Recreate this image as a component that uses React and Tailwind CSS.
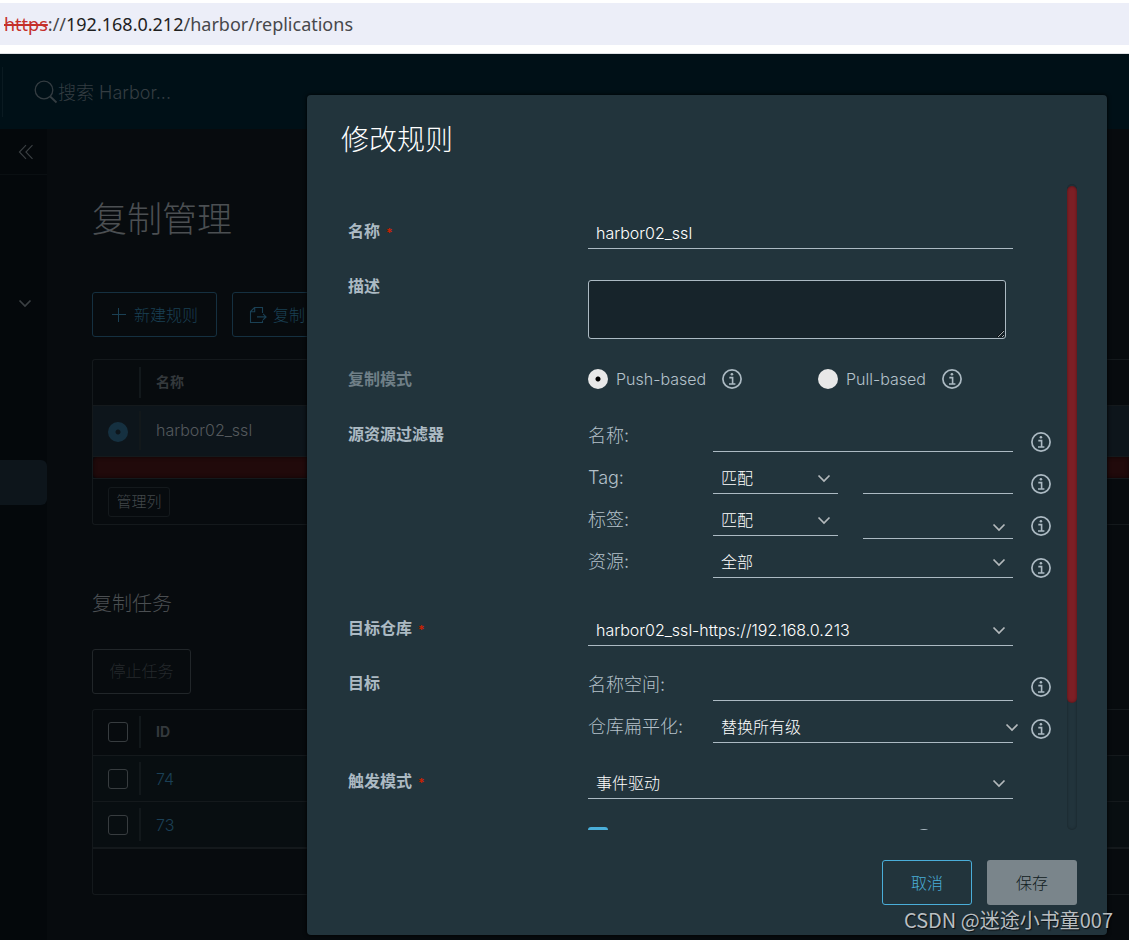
import clsx from "clsx";

const JOBS = [74, 73];

/* ── Icons ─────────────────────────────────────────────────────────── */

function InfoIcon({ className }) {
  return (
    <svg viewBox="0 0 20 20" className={clsx("size-5 shrink-0", className)} fill="none" aria-hidden="true">
      <circle cx="10" cy="10" r="9.1" stroke="currentColor" strokeWidth="1.7" />
      <circle cx="9.9" cy="5.3" r="1.3" fill="currentColor" />
      <path d="M7.3 8.6h3.3v6M7 15h6.4" stroke="currentColor" strokeWidth="1.6" />
    </svg>
  );
}

function Chevron({ className }) {
  return (
    <svg viewBox="0 0 14 9" className={clsx("h-[9px] w-[14px]", className)} fill="none" aria-hidden="true">
      <path d="M1.5 1.5 7 7l5.5-5.5" stroke="currentColor" strokeWidth="1.7" />
    </svg>
  );
}

function SearchIcon() {
  return (
    <svg viewBox="0 0 24 24" className="size-6" fill="none" stroke="currentColor" strokeWidth="1.3" aria-hidden="true">
      <circle cx="10" cy="10" r="8.8" />
      <path d="m16.2 16.5 6.3 6" strokeWidth="1.8" />
    </svg>
  );
}

function CollapseIcon() {
  return (
    <svg viewBox="0 0 16 16" className="size-4" fill="none" stroke="currentColor" strokeWidth="1.1" aria-hidden="true">
      <path d="M8 1.2 1.4 8 8 14.8M14.5 1.2 7.9 8l6.6 6.8" />
    </svg>
  );
}

function PlusIcon() {
  return (
    <svg viewBox="0 0 16 16" className="size-4" stroke="currentColor" aria-hidden="true">
      <path d="M1 7.5h14M7.5 1v14" />
    </svg>
  );
}

function ReplicateIcon() {
  return (
    <svg viewBox="0 0 18 18" className="size-[18px]" fill="none" stroke="currentColor" strokeWidth="1.1" aria-hidden="true">
      <path d="M13.5 7V1.5h-8l-4 4v11h12v-2M1.5 5.8h4.2V1.5M8 10.9h9M14 7.8l3.1 3.1-3.1 3" />
    </svg>
  );
}

/* ── Form parts ────────────────────────────────────────────────────── */

/** Label on the left, controls on the right. */
function FormRow({ label, htmlFor, required, muted, className, children }) {
  const Label = htmlFor ? "label" : "span";
  return (
    <div className={clsx("grid grid-cols-[240px_1fr] items-start", className)}>
      <Label
        htmlFor={htmlFor}
        className={clsx("text-base leading-7 font-bold", muted ? "text-[#6f7f87]" : "text-[#acbac3]")}
      >
        {label}
        {required && <span className="ml-1.5 align-middle text-xs leading-none text-[#c92100]">*</span>}
      </Label>
      <div>{children}</div>
    </div>
  );
}

function TextInput({ className, ...rest }) {
  return (
    <input
      type="text"
      className={clsx(
        "h-8 border-b border-[#acbac3] bg-transparent px-2 text-base font-light text-white outline-none",
        className
      )}
      {...rest}
    />
  );
}

function SelectInput({ options, className, chevronClass = "top-3 right-[7px]", ...rest }) {
  return (
    <div className={clsx("relative h-8", className)}>
      <select
        className="h-8 w-full appearance-none border-b border-[#acbac3] bg-transparent px-2 text-base font-light text-white outline-none"
        {...rest}
      >
        {options.map((o) => (
          <option key={o}>{o}</option>
        ))}
      </select>
      <Chevron className={clsx("pointer-events-none absolute text-[#b4b9bc]", chevronClass)} />
    </div>
  );
}

/** One line of a grouped field: caption, control and info mark. */
function SubField({ label, htmlFor, infoClass, children }) {
  return (
    <div className="grid grid-cols-[125px_300px_20px] items-end">
      <label htmlFor={htmlFor} className="text-lg leading-8 font-light text-[#b4c1ca]">
        {label}
      </label>
      <div className="flex items-end justify-between">{children}</div>
      <InfoIcon className={clsx("ml-[18px] text-[#acbac3]", infoClass)} />
    </div>
  );
}

function ModeRadio({ label, ...rest }) {
  return (
    <div className="flex w-[230px] items-center">
      <label className="flex items-center gap-2 text-base font-light text-[#b4c1ca]">
        <input
          type="radio"
          name="mode"
          className="size-5 appearance-none rounded-full bg-[#e8e8e8] checked:bg-[radial-gradient(circle,#000_2px,#e8e8e8_3px)]"
          {...rest}
        />
        {label}
      </label>
      <InfoIcon className="ml-4 text-[#acbac3]" />
    </div>
  );
}

function EditRuleDialog() {
  return (
    <div
      role="dialog"
      aria-labelledby="dialog-title"
      className="flex w-[800px] flex-col rounded bg-[#22343c] px-[30px] pb-[30px] shadow-[0_0_4px_#000]"
    >
      <h2 id="dialog-title" className="h-[89px] pt-[25px] pl-1 text-[28px] leading-10 font-light text-white">
        修改规则
      </h2>

      <div className="flex min-h-0 flex-1">
        <form className="flex-1 overflow-hidden pt-[33px] pl-[11px]">
          <FormRow label="名称" htmlFor="rule-name" required>
            <TextInput id="rule-name" defaultValue="harbor02_ssl" className="block w-[425px]" />
          </FormRow>

          <FormRow label="描述" htmlFor="rule-desc" className="mt-[23px]">
            <textarea
              id="rule-desc"
              className="mt-2 block h-[59px] w-[418px] rounded-[3px] border border-[#acbac3] bg-[#17242b] outline-none"
            />
          </FormRow>

          <FormRow label="复制模式" muted className="mt-[26px]">
            <div className="flex h-7 items-center">
              <ModeRadio label="Push-based" defaultChecked />
              <ModeRadio label="Pull-based" />
            </div>
          </FormRow>

          <FormRow label="源资源过滤器" className="mt-[27px]">
            <div className="flex flex-col gap-[10px]">
              <SubField label="名称:" htmlFor="filter-name">
                <TextInput id="filter-name" className="w-full" />
              </SubField>
              <SubField label="Tag:" htmlFor="filter-tag">
                <SelectInput id="filter-tag" options={["匹配", "排除"]} className="w-[125px]" />
                <TextInput aria-label="Tag" className="w-[150px]" />
              </SubField>
              <SubField label="标签:" htmlFor="filter-label">
                <SelectInput id="filter-label" options={["匹配", "排除"]} className="w-[125px]" />
                <SelectInput
                  aria-label="标签"
                  options={[""]}
                  className="-mb-[3px] w-[150px]"
                  chevronClass="top-4 right-[7px]"
                />
              </SubField>
              <SubField label="资源:" htmlFor="filter-resource">
                <SelectInput id="filter-resource" options={["全部"]} className="w-full" />
              </SubField>
            </div>
          </FormRow>

          <FormRow label="目标仓库" htmlFor="dest-registry" required className="mt-9">
            <SelectInput
              id="dest-registry"
              options={["harbor02_ssl-https://192.168.0.213"]}
              className="w-[425px]"
            />
          </FormRow>

          <FormRow label="目标" className="mt-[23px]">
            <div className="flex flex-col gap-[10px]">
              <SubField label="名称空间:" htmlFor="dest-namespace" infoClass="mb-1">
                <TextInput id="dest-namespace" className="w-full" />
              </SubField>
              <SubField label="仓库扁平化:" htmlFor="dest-flatten" infoClass="mb-1">
                <SelectInput
                  id="dest-flatten"
                  options={["替换所有级"]}
                  className="w-full"
                  chevronClass="top-3 -right-[6px]"
                />
              </SubField>
            </div>
          </FormRow>

          <FormRow label="触发模式" htmlFor="trigger" required className="mt-6">
            <SelectInput id="trigger" options={["事件驱动"]} className="w-[425px]" />
          </FormRow>

          {/* Runs past the bottom of the scroll area */}
          <FormRow className="mt-7">
            <div className="flex items-start">
              <input
                type="checkbox"
                defaultChecked
                aria-label="删除本地资源时同时也删除远程的资源"
                className="size-5 appearance-none rounded-[3px] bg-[#4aaed9]"
              />
              <InfoIcon className="mt-[2px] ml-[306px] text-[#acbac3]" />
            </div>
          </FormRow>
        </form>

        {/* Scroll track */}
        <div className="w-[10px] rounded-full shadow-[inset_0_0_3px_rgba(0,0,0,0.35)]">
          <div className="mt-[2px] h-[80%] rounded-full bg-[#7d1f25] shadow-[inset_0_0_3px_rgba(0,0,0,0.4)]" />
        </div>
      </div>

      <div className="mt-[30px] flex justify-end gap-[15px]">
        <button
          type="button"
          className="h-[45px] w-[90px] rounded-[3px] border border-[#4aaed9] text-base font-light text-[#4aaed9]"
        >
          取消
        </button>
        <button type="button" disabled className="h-[45px] w-[90px] rounded-[3px] bg-[#7a858b] text-base font-light text-[#111c21]">
          保存
        </button>
      </div>
    </div>
  );
}

/* ── Page behind the dialog ────────────────────────────────────────── */

function Separator({ className }) {
  return <div className={clsx("ml-auto w-[2px] bg-[#12181b]", className)} />;
}

function RuleTable() {
  return (
    <div className="mt-[22px] rounded-l-[3px] border border-r-0 border-[#14191c]">
      <table className="w-full">
        <thead>
          <tr className="h-[45px] border-b border-[#14191c]">
            <th className="w-12 p-0">
              <Separator className="h-[31px]" />
            </th>
            <th className="pl-[15px] text-left text-sm text-[#34393c]">名称</th>
          </tr>
        </thead>
        <tbody>
          <tr className="h-[51px] border-b border-[#14191c] bg-[#0d151b]">
            <td className="p-0">
              <div className="flex items-center pl-[15px]">
                <input
                  type="radio"
                  name="rule"
                  defaultChecked
                  aria-label="harbor02_ssl"
                  className="mt-[3px] size-5 appearance-none rounded-full bg-[radial-gradient(circle,#0d151b_2px,#153040_3px)]"
                />
                <Separator className="h-[39px]" />
              </div>
            </td>
            <td className="pb-[2px] pl-[15px] text-base font-light text-[#54595d]">harbor02_ssl</td>
          </tr>
        </tbody>
      </table>
      <div className="h-[21px] rounded-l bg-[#210a0b] shadow-[inset_0_0_4px_rgba(0,0,0,0.6)]" />
      <div className="border-t border-[#14191c] px-[15px] pt-2 pb-[7px]">
        <button type="button" className="h-[30px] w-[62px] rounded-[3px] border border-[#14191c] text-[15px] leading-none font-light text-[#43484b]">
          管理列
        </button>
      </div>
    </div>
  );
}

function TaskBox(props) {
  return (
    <input type="checkbox" className="size-5 appearance-none rounded-[3px] border border-[#373c3f]" {...props} />
  );
}

function TaskTable() {
  return (
    <div className="mt-[15px] rounded-l-[3px] border border-r-0 border-[#14191c]">
      <table className="w-full">
        <thead>
          <tr className="h-[46px] border-b border-[#14191c]">
            <th className="w-12 p-0">
              <div className="flex items-center pl-[15px]">
                <TaskBox aria-label="全选" />
                <Separator className="h-8" />
              </div>
            </th>
            <th className="pl-[15px] text-left text-sm text-[#34393c]">ID</th>
          </tr>
        </thead>
        <tbody>
          {JOBS.map((id) => (
            <tr key={id} className="h-[46px] border-b border-[#14191c] bg-[#080e11]">
              <td className="p-0">
                <div className="flex items-center pl-[15px]">
                  <TaskBox aria-label={`任务 ${id}`} />
                  <Separator className="h-[33px]" />
                </div>
              </td>
              <td className="pl-[15px] text-base font-light">
                <a href={`#${id}`} className="text-[#1b4056]">{id}</a>
              </td>
            </tr>
          ))}
        </tbody>
      </table>
      <div className="h-[46px] border-t border-[#14191c]" />
    </div>
  );
}

export default function App() {
  return (
    <div className="flex min-h-screen flex-col overflow-hidden bg-white font-['Inter','Noto_Sans_CJK_SC',sans-serif]">
      {/* Address bar */}
      <div className="border-b border-[#dfe1e5] pt-[3px] pb-2">
        <div className="h-[42px] bg-[#eceef8] pl-1 font-['Noto_Sans',sans-serif] text-lg leading-[42px] text-[#47484b]">
          <span className="text-[#c5302a] line-through decoration-2">https</span>
          ://<span className="text-[#1f1f1f]">192.168.0.212</span>/harbor/replications
        </div>
      </div>

      <div className="relative flex flex-1 flex-col bg-[#070b0e]">
        <header className="flex h-[75px] items-center bg-[#001017] pl-[2px] text-[#343d42]">
          <div className="h-[50px] w-px bg-[#0a1a21]" />
          <label htmlFor="search" className="ml-[31px]">
            <SearchIcon />
          </label>
          <input
            id="search"
            type="text"
            placeholder="搜索 Harbor..."
            className="w-56 bg-transparent pt-[2px] text-lg font-light outline-none placeholder:text-[#343d42]"
          />
        </header>

        <div className="flex flex-1">
          {/* Collapsed sidebar */}
          <nav className="w-[47px] bg-[#04080b] text-[#3b4043]">
            <button type="button" aria-label="收起" className="flex h-[46px] w-full items-center justify-center border-b border-[#0a0f12] pl-1">
              <CollapseIcon />
            </button>
            <button type="button" aria-label="展开" className="mt-[105px] flex h-[46px] w-full items-center justify-center pl-[3px]">
              <Chevron />
            </button>
            <a href="#replications" aria-label="复制管理" className="mt-[134px] block h-[45px] rounded-r-md bg-[#0d151b]" />
          </nav>

          <main className="min-w-0 flex-1 pl-[45px]">
            <h1 className="mt-[65px] text-[35px] leading-[50px] font-light text-[#4b4f52]">复制管理</h1>

            <div className="mt-12 flex gap-[15px] text-base font-light text-[#1a4054]">
              <button type="button" className="flex h-[45px] w-[125px] items-center justify-center gap-[7px] rounded-[3px] border border-[#153040]">
                <PlusIcon />
                新建规则
              </button>
              <button type="button" className="flex h-[45px] w-[125px] items-center gap-[6px] rounded-[3px] border border-[#153040] pl-4">
                <ReplicateIcon />
                复制
              </button>
            </div>

            <RuleTable />

            <h2 className="mt-[65px] text-xl leading-7 font-light text-[#4b4f52]">复制任务</h2>
            <button
              type="button"
              disabled
              className="mt-[31px] block h-[45px] w-[99px] rounded-[3px] border border-[#212629] text-base font-light text-[#25292c]"
            >
              停止任务
            </button>

            <TaskTable />
          </main>
        </div>

        {/* Modal layer */}
        <div className="absolute inset-0 flex justify-end pt-[41px] pr-[22px] pb-[5px]">
          <EditRuleDialog />
        </div>

        <p className="absolute right-4 bottom-[6px] font-['Noto_Sans_CJK_SC',sans-serif] text-xl leading-7 text-[#b9bec1] [text-shadow:1px_1px_1px_rgba(0,0,0,0.7)]">
          CSDN @迷途小书童007
        </p>
      </div>
    </div>
  );
}
